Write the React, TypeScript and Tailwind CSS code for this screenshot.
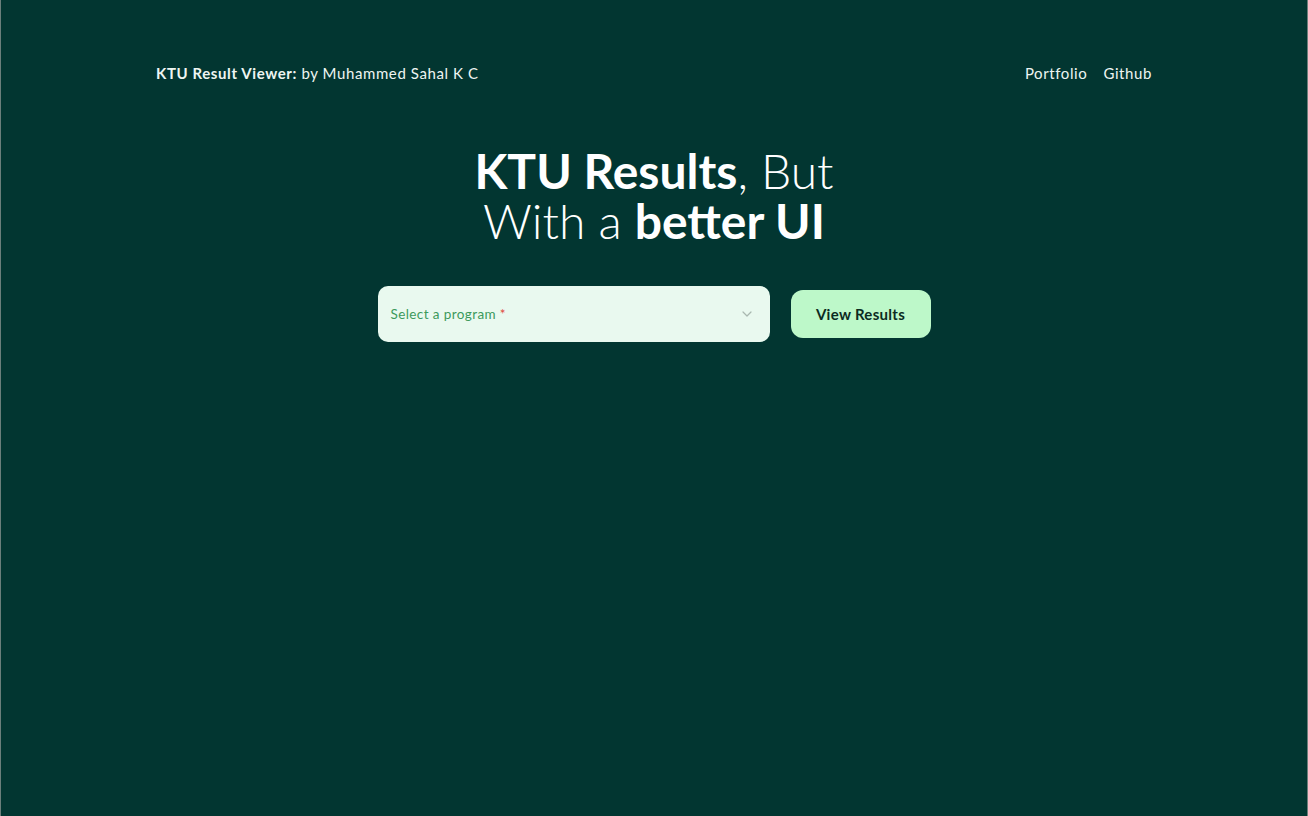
import React from "react";

export default function App() {
  return (
    <div
      className="min-h-[816px] w-full bg-[#023631] border-l border-r border-[#6b7f7b] text-[#eef5f2]"
      style={{ fontFamily: "Lato, 'Noto Sans', sans-serif" }}
    >
      <header className="w-[996px] mx-auto flex items-center justify-between pt-[63px] text-[15px] leading-[20px] tracking-[0.6px]">
        <div>
          <span className="font-bold">KTU Result Viewer:</span>
          <span> by Muhammed Sahal K C</span>
        </div>
        <nav className="flex gap-[16px]">
          <a>Portfolio</a>
          <a>Github</a>
        </nav>
      </header>

      <h1 className="mt-[63px] text-center text-[48px] leading-[50px] text-white">
        <span className="font-bold">KTU Results</span>
        <span className="font-light">, But</span>
        <br />
        <span className="font-light">With a </span>
        <span className="font-bold">better UI</span>
      </h1>

      <div className="mt-[40px] flex items-center justify-center gap-[21px]">
        <div className="w-[392px] h-[56px] rounded-[10px] bg-[#e9f9ef] flex items-center justify-between pl-[13px] pr-[18px]">
          <span className="text-[13.5px] tracking-[0.4px] text-[#3c9a5c]">
            Select a program<span className="text-[#e0453a]"> *</span>
          </span>
          <svg width="10" height="6" viewBox="0 0 10 6" fill="none">
            <path d="M1 1l4 4 4-4" stroke="#a9b8b0" strokeWidth="1.2" strokeLinecap="round" strokeLinejoin="round" />
          </svg>
        </div>
        <button className="w-[140px] h-[48px] rounded-[12px] bg-[#bdf8c9] text-[#0b2b22] font-bold text-[15px] tracking-[0.3px]">
          View Results
        </button>
      </div>
    </div>
  );
}
